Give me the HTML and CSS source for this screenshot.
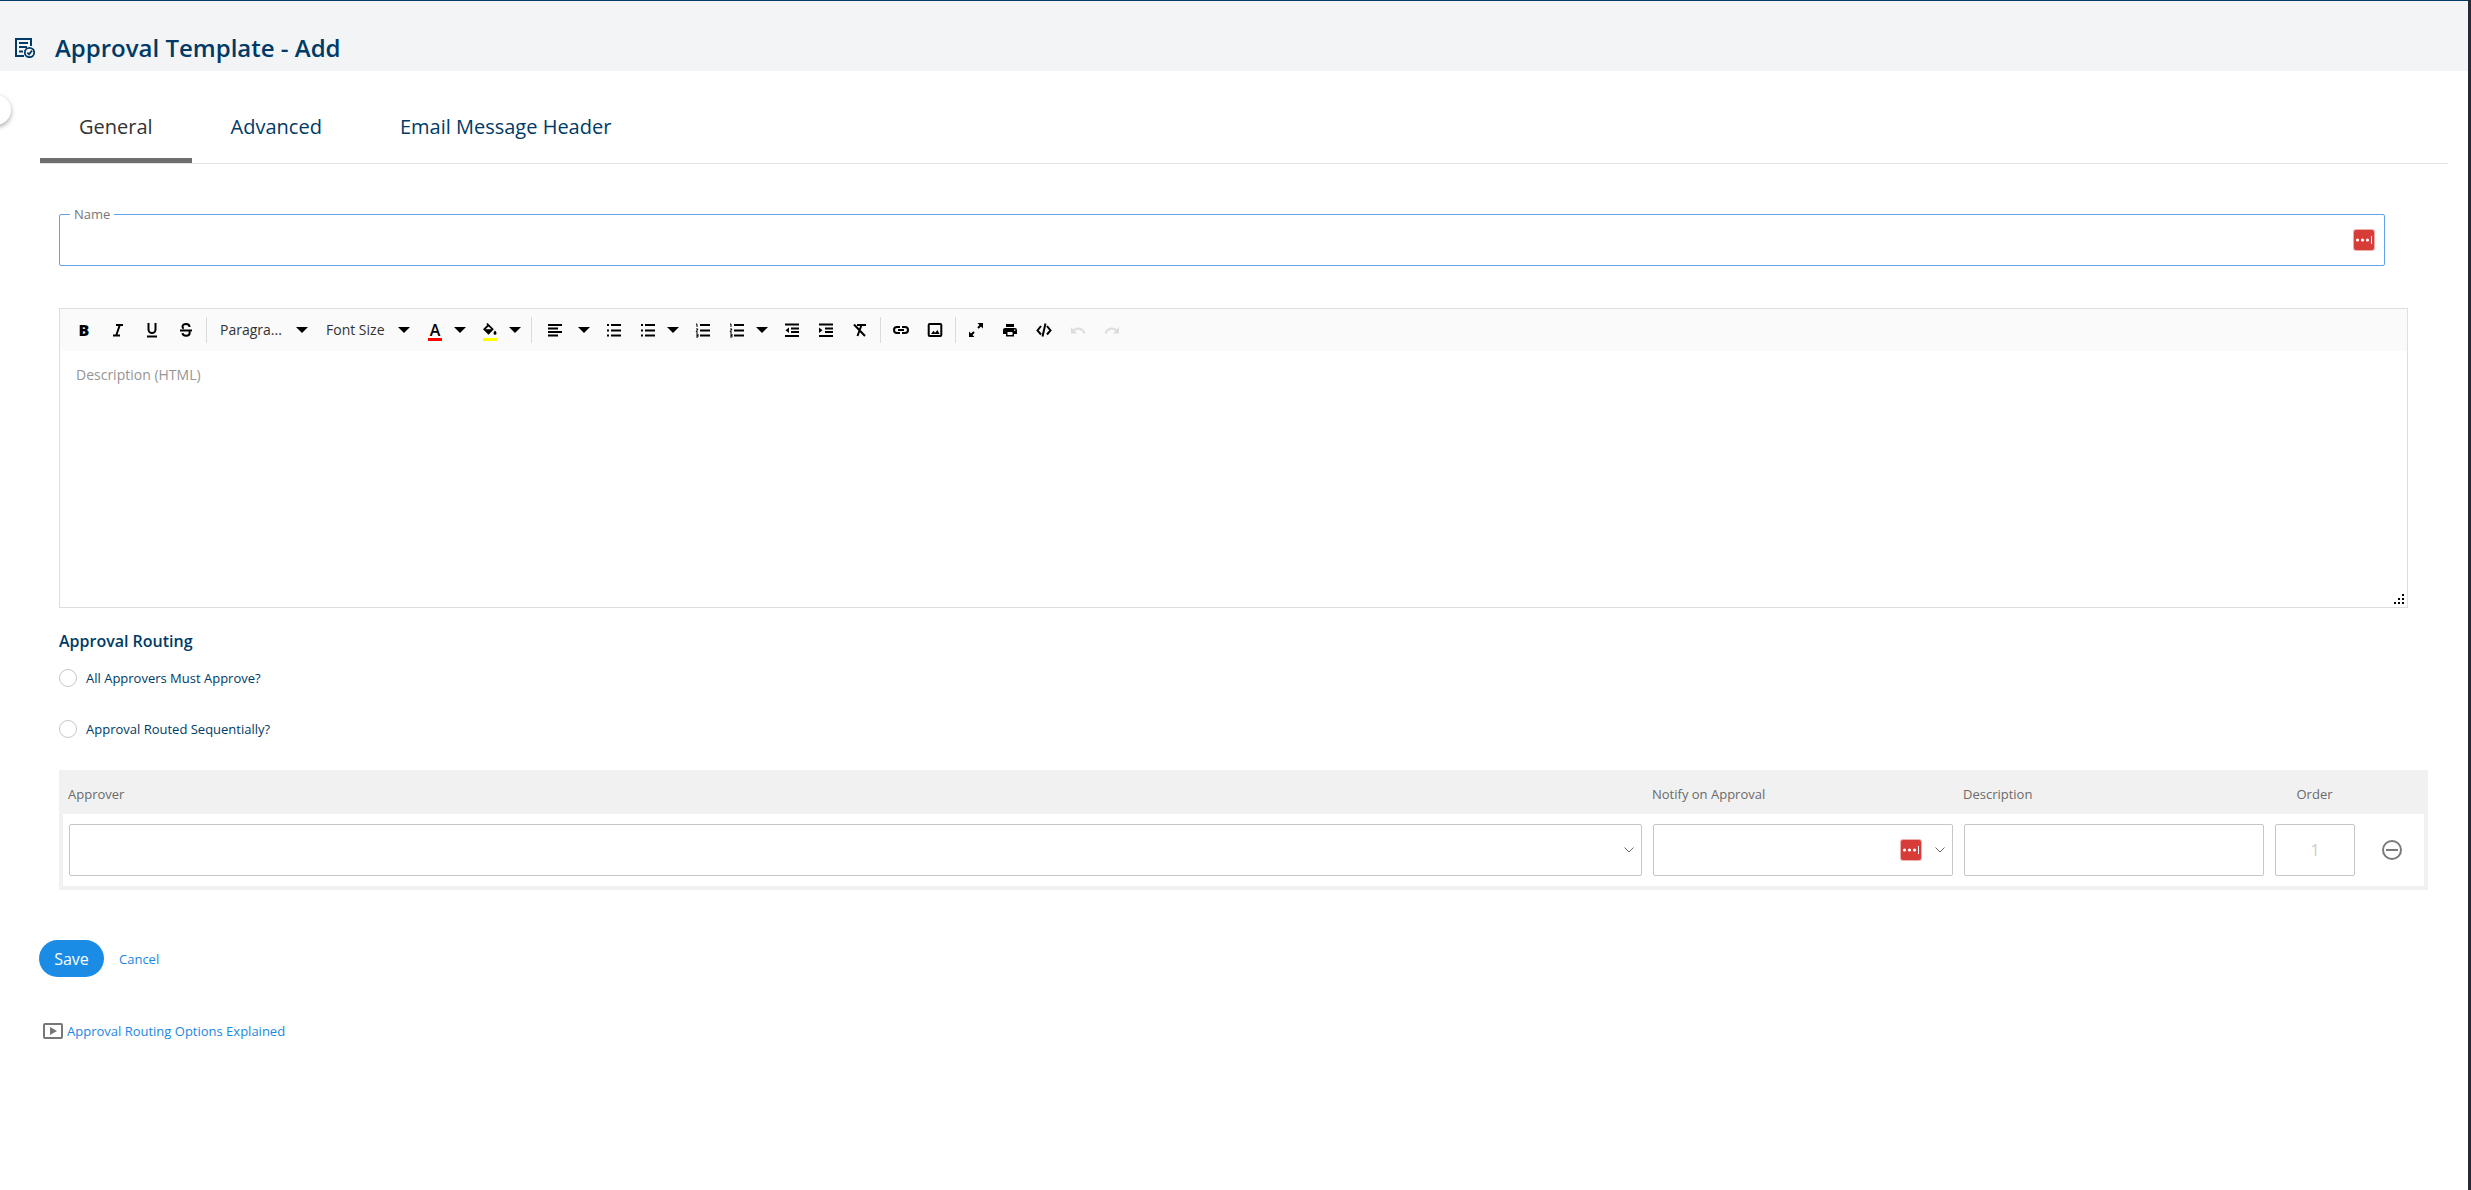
FILE: index.html
```html
<!DOCTYPE html>
<html lang="en">
<head>
<meta charset="utf-8">
<title>Approval Template - Add</title>
<link rel="stylesheet" href="styles.css">
</head>
<body>
<header class="page-header">
  <svg class="page-icon" viewBox="0 0 20 20" fill="none" stroke="currentColor" stroke-width="2" aria-hidden="true">
    <path d="M16 8V1H1v17h8"/>
    <path d="M4 5h9M4 9h8M4 13.500h4"/>
    <circle cx="14.500" cy="14.500" r="4.700" stroke-width="1.800"/>
    <path d="M12.300 14.500l1.700 1.800 3-3.600" stroke-width="1.800"/>
  </svg>
  <h1 class="page-title">Approval Template - Add</h1>
</header>
<button class="drawer-handle" type="button" aria-label="Open menu"></button>
<main class="content">
  <nav class="tabs">
    <a class="tab tab-active" href="#general">General</a>
    <a class="tab" href="#advanced">Advanced</a>
    <a class="tab" href="#header">Email Message Header</a>
  </nav>
  <form class="form">
    <fieldset class="name-field">
      <legend class="name-legend"><label for="name">Name</label></legend>
      <input class="name-input" id="name" type="text">
      <svg class="vault" viewBox="0 0 22 22" aria-hidden="true"><rect width="22" height="22" rx="3" fill="#eeb0ae"/><rect x="1" y="1" width="20" height="20" rx="2" fill="#d83c39"/><g fill="#fff"><circle cx="4.500" cy="11" r="1.600"/><circle cx="9.500" cy="11" r="1.600"/><circle cx="14.500" cy="11" r="1.600"/><rect x="18" y="7" width="1" height="8"/></g></svg>
    </fieldset>

    <section class="editor">
      <div class="toolbar" role="toolbar" aria-label="Formatting">
        <button class="tool letter bold" type="button" aria-label="Bold">B</button>
        <button class="tool" type="button" aria-label="Italic"><svg class="glyph" viewBox="0 0 16 16"><path d="M6 3h7M3 13.500h7M9.800 3L6.200 13.500"/></svg></button>
        <button class="tool" type="button" aria-label="Underline"><svg class="glyph" viewBox="0 0 16 16"><path d="M4.500 1v6.500a3.500 3.500 0 0 0 7 0V1M3 14.500h10"/></svg></button>
        <button class="tool" type="button" aria-label="Strikethrough"><svg class="glyph" viewBox="0 0 16 16"><path d="M2 8.500h12M11.500 5C11.500 1 4.500 1 4.500 4.500c0 1 .5 1.800 1.200 2.200M4.500 11.200c.3 3.400 7.200 3.400 7.200-.2 0-.6-.2-1-.5-1.500"/></svg></button>
        <span class="sep"></span>
        <span class="picker picker-format">
          <select class="picker-select" aria-label="Format"><option>Paragra...</option></select>
          <svg class="caret" viewBox="0 0 12 6"><path d="M0 0h12L6 6z"/></svg>
        </span>
        <span class="picker">
          <select class="picker-select" aria-label="Font size"><option>Font Size</option></select>
          <svg class="caret" viewBox="0 0 12 6"><path d="M0 0h12L6 6z"/></svg>
        </span>
        <span class="split">
          <button class="tool letter swatch" type="button" aria-label="Font color">A</button>
          <button class="drop" type="button" aria-label="Font color options"><svg class="caret" viewBox="0 0 12 6"><path d="M0 0h12L6 6z"/></svg></button>
        </span>
        <span class="split">
          <button class="tool swatch swatch-yellow" type="button" aria-label="Background color"><svg class="glyph solid" viewBox="0 0 16 16"><path fill-rule="evenodd" d="M5.500 1l6.300 6.300-5.300 5.500L1 7.300l4.300-4.300-1-1zM6.500 4.500L3.500 7.300h6zM13 8.500c1 1.300 1.500 2 1.500 2.700a1.500 1.500 0 0 1-3 0c0-.7.5-1.400 1.500-2.700z"/></svg></button>
          <button class="drop" type="button" aria-label="Background color options"><svg class="caret" viewBox="0 0 12 6"><path d="M0 0h12L6 6z"/></svg></button>
        </span>
        <span class="sep"></span>
        <span class="split wide">
          <button class="tool" type="button" aria-label="Align"><svg class="glyph" viewBox="0 0 16 16"><path d="M1 3h14M1 6.500h10M1 10h14M1 13.500h10"/></svg></button>
          <button class="drop" type="button" aria-label="Align options"><svg class="caret" viewBox="0 0 12 6"><path d="M0 0h12L6 6z"/></svg></button>
        </span>
        <button class="tool" type="button" aria-label="Bulleted list"><svg class="glyph" viewBox="0 0 16 16"><path d="M1 3h2M5 3h10M1 8.500h2M5 8.500h10M1 13.500h2M5 13.500h10"/></svg></button>
        <span class="split">
          <button class="tool" type="button" aria-label="Bullet format"><svg class="glyph" viewBox="0 0 16 16"><path d="M1 3h2M5 3h10M1 8.500h2M5 8.500h10M1 13.500h2M5 13.500h10"/></svg></button>
          <button class="drop" type="button" aria-label="Bullet format options"><svg class="caret" viewBox="0 0 12 6"><path d="M0 0h12L6 6z"/></svg></button>
        </span>
        <button class="tool" type="button" aria-label="Numbered list"><svg class="glyph" viewBox="0 0 16 16"><path d="M5 3h10M5 8.500h10M5 13.500h10"/><path class="thin" d="M1 2h1v3M1 7h2L1 10h2M1 12h2v3H1M1.500 13.500H3"/></svg></button>
        <span class="split">
          <button class="tool" type="button" aria-label="Number format"><svg class="glyph" viewBox="0 0 16 16"><path d="M5 3h10M5 8.500h10M5 13.500h10"/><path class="thin" d="M1 2h1v3M1 7h2L1 10h2M1 12h2v3H1M1.500 13.500H3"/></svg></button>
          <button class="drop" type="button" aria-label="Number format options"><svg class="caret" viewBox="0 0 12 6"><path d="M0 0h12L6 6z"/></svg></button>
        </span>
        <button class="tool" type="button" aria-label="Outdent"><svg class="glyph" viewBox="0 0 16 16"><path d="M1 2.500h14M7 6.500h8M7 10h8M1 14h14"/><path class="solid" d="M5 5.500v5.500L1.500 8.200z"/></svg></button>
        <button class="tool" type="button" aria-label="Indent"><svg class="glyph" viewBox="0 0 16 16"><path d="M1 2.500h14M7 6.500h8M7 10h8M1 14h14"/><path class="solid" d="M1 5.500v5.500l3.500-2.800z"/></svg></button>
        <button class="tool" type="button" aria-label="Clear format"><svg class="glyph" viewBox="0 0 16 16"><path d="M2 2.500l11 11.500M5 3h9M9.500 3L5.500 14"/></svg></button>
        <span class="sep"></span>
        <button class="tool" type="button" aria-label="Insert link"><svg class="glyph" viewBox="0 0 16 16"><path d="M7 5H4a3 3 0 0 0 0 6h3M9 5h3a3 3 0 0 1 0 6H9M5 8h6"/></svg></button>
        <button class="tool" type="button" aria-label="Insert image"><svg class="glyph" viewBox="0 0 16 16"><rect x="1.700" y="2" width="12.600" height="12" rx="1"/><path class="solid" d="M4 12l2.500-3.300 1.500 2L10.500 8l2 4z"/></svg></button>
        <span class="sep"></span>
        <button class="tool" type="button" aria-label="Full screen"><svg class="glyph" viewBox="0 0 16 16"><path d="M10 6l3.500-3.500M6 10l-3.500 3.500"/><path class="solid" d="M9.500 1H15v5.500zM1 9.500V15h5.500z"/></svg></button>
        <button class="tool" type="button" aria-label="Print"><svg class="glyph solid" viewBox="0 0 16 16"><path fill-rule="evenodd" d="M4 2h8v3H4zM3 6h10a2 2 0 0 1 2 2v4h-3v2.500H4V12H1V8a2 2 0 0 1 2-2zM5.500 10v3h5v-3zM12 7.500v1.300h1.300V7.500z"/></svg></button>
        <button class="tool" type="button" aria-label="Source code"><svg class="glyph" viewBox="0 0 16 16"><path d="M5 4L1.500 8.500 5 12.500M11 4l3.500 4.500L11 12.500M9.500 1.500l-3 13"/></svg></button>
        <button class="tool" type="button" aria-label="Undo" disabled><svg class="glyph" viewBox="0 0 16 16"><path d="M3.500 8.500c4-3.500 9-2 11 2.800"/><path class="solid" d="M1 5v6.500h6z"/></svg></button>
        <button class="tool" type="button" aria-label="Redo" disabled><svg class="glyph" viewBox="0 0 16 16"><path d="M12.500 8.500c-4-3.500-9-2-11 2.800"/><path class="solid" d="M15 5v6.500H9z"/></svg></button>
      </div>
      <textarea class="editor-text" aria-label="Description" placeholder="Description (HTML)"></textarea>
      <svg class="grip" viewBox="0 0 10 10" aria-hidden="true"><path d="M0 8h2v2H0zM4 8h2v2H4zM8 8h2v2H8zM4 4h2v2H4zM8 4h2v2H8zM8 0h2v2H8z"/></svg>
    </section>

    <h2 class="section-title">Approval Routing</h2>
    <div class="choices">
      <label class="choice"><input class="radio" type="radio" name="routing">All Approvers Must Approve?</label>
      <label class="choice"><input class="radio" type="radio" name="routing">Approval Routed Sequentially?</label>
    </div>

    <table class="approvers">
      <thead>
        <tr><th>Approver</th><th class="col-mid">Notify on Approval</th><th class="col-mid">Description</th><th class="col-order">Order</th><th class="col-remove"></th></tr>
      </thead>
      <tbody>
        <tr>
          <td><span class="combo"><select class="box" aria-label="Approver"><option></option></select><svg class="chevron" viewBox="0 0 10 6"><path d="M.5.5L5 5 9.500.5"/></svg></span></td>
          <td><span class="combo"><select class="box" aria-label="Notify on Approval"><option></option></select><svg class="vault" viewBox="0 0 22 22" aria-hidden="true"><rect width="22" height="22" rx="3" fill="#eeb0ae"/><rect x="1" y="1" width="20" height="20" rx="2" fill="#d83c39"/><g fill="#fff"><circle cx="4.500" cy="11" r="1.600"/><circle cx="9.500" cy="11" r="1.600"/><circle cx="14.500" cy="11" r="1.600"/><rect x="18" y="7" width="1" height="8"/></g></svg><svg class="chevron" viewBox="0 0 10 6"><path d="M.5.5L5 5 9.500.5"/></svg></span></td>
          <td><input class="box" type="text" aria-label="Description"></td>
          <td><input class="box order" type="text" value="1" aria-label="Order" disabled></td>
          <td class="remove-cell"><button class="remove" type="button" aria-label="Remove approver"><svg class="remove-icon" viewBox="0 0 20 20"><circle cx="10" cy="10" r="9"/><path d="M4 10h12"/></svg></button></td>
        </tr>
      </tbody>
    </table>
  </form>

  <div class="actions">
    <button class="save" type="button">Save</button>
    <a class="link" href="#cancel">Cancel</a>
  </div>
  <a class="link help" href="#help"><svg class="play" viewBox="0 0 20 16"><rect x="1" y="1" width="18" height="14" rx="1"/><path d="M7 4l7 4-7 4z"/></svg>Approval Routing Options Explained</a>
</main>
</body>
</html>
```

FILE: styles.css
```css
* { box-sizing: border-box; }

body {
  margin: 0;
  min-height: 100vh;
  border-right: 3px solid #262a38;
  background: #fff;
  color: #003a66;
  font: 13px/18px "Open Sans", sans-serif;
}

button, input, select, textarea { font: inherit; color: inherit; }
button { padding: 0; border: 0; background: none; }

.page-header {
  display: flex;
  align-items: center;
  gap: 20px;
  height: 71px;
  padding: 24px 15px 0;
  border-top: 1px solid #003a66;
  background: #f3f4f6;
}
.page-icon { width: 20px; height: 20px; }
.page-title { margin: 0; font-size: 24px; line-height: 32px; font-weight: 600; }

.drawer-handle {
  position: absolute;
  left: -19px;
  top: 95px;
  width: 30px;
  height: 30px;
  border-radius: 50%;
  background: #fff;
  box-shadow: 0 2px 5px rgba(0, 0, 0, .35);
}

.content { padding: 0 20px 40px 39px; }

.tabs { display: flex; height: 93px; margin-left: 1px; padding-top: 24px; border-bottom: 1px solid #e4e4e4; }
.tab {
  padding: 16px 39px 0;
  border-bottom: 5px solid transparent;
  color: #003a66;
  font-size: 20px;
  line-height: 32px;
  font-weight: 500;
  text-decoration: none;
}
.tab-active { border-color: #6e6e6e; color: #333; }

.form { padding: 41px 20px 0; }

.name-field {
  display: flex;
  align-items: center;
  height: 61px;
  margin: 0 43px 0 0;
  padding: 0 9px 9px 10px;
  border: 1px solid #65a2ee;
  border-radius: 2px;
}
.name-legend { padding: 0 4px; color: #777; line-height: 19px; }
.name-input { flex: 1; height: 32px; border: 0; outline: 0; background: none; }
.vault { width: 22px; height: 22px; }

.editor {
  position: relative;
  margin: 42px 20px 0 0;
  border: 1px solid #dedede;
}
.toolbar {
  display: flex;
  align-items: center;
  height: 42px;
  padding: 0 7px;
  background: #fafafa;
  color: #000;
}
.tool { display: flex; justify-content: center; align-items: center; width: 34px; height: 32px; }
.tool:disabled { color: #dcdcdc; }
.glyph { flex: none; width: 16px; height: 16px; fill: none; stroke: currentColor; stroke-width: 2; }
.glyph .thin { stroke-width: 1; }
.solid, .glyph .solid { fill: currentColor; stroke: none; }
.letter { font-size: 16px; line-height: 16px; font-weight: 600; }
.bold { font-weight: 800; }
.sep { width: 1px; height: 26px; margin: 0 3px; background: #dadada; }
.split { display: flex; align-items: center; padding: 0 3px; }
.split .tool { width: 28px; }
.split .swatch { width: 14px; height: 20px; margin: 2px 7px 0; border-bottom: 3px solid #f00; }
.split .swatch-yellow { border-color: #ff0; }
.drop { display: flex; justify-content: center; align-items: center; width: 21px; height: 32px; }
.wide { padding: 0 2px; }
.wide .tool { width: 36px; }
.wide .drop { width: 22px; }
.caret { width: 12px; height: 6px; fill: #000; }
.picker { display: flex; align-items: center; width: 102px; padding: 0 8px 0 10px; }
.picker-format { width: 106px; }
.picker-select { flex: 1; min-width: 0; padding: 0; border: 0; background: none; appearance: none; color: #333; font-size: 14px; line-height: 20px; }

.editor-text {
  display: block;
  width: 100%;
  height: 256px;
  padding: 14px 16px;
  border: 0;
  outline: 0;
  resize: none;
  font-size: 14px;
  line-height: 20px;
}
.editor-text::placeholder { color: #959595; }
.grip { position: absolute; right: 3px; bottom: 3px; width: 10px; height: 10px; }

.section-title { margin: 21px 0 16px; font-size: 16px; line-height: 24px; font-weight: 600; }

.choices { display: grid; gap: 33px; justify-content: start; margin-bottom: 32px; }
.choice { display: flex; align-items: center; gap: 9px; }
.radio { appearance: none; width: 18px; height: 18px; margin: 0; border: 1px solid #c3c8cd; border-radius: 50%; background: #fff; }

.approvers {
  width: 100%;
  table-layout: fixed;
  border: 4px solid #f1f1f1;
  border-spacing: 0;
}
.approvers th { height: 40px; padding: 0 5px; background: #f1f1f1; color: #6a6a6a; font-weight: 400; text-align: left; }
.approvers td { height: 72px; padding: 0 5px 0 6px; }
.approvers .remove-cell { padding: 0; }
.col-mid { width: 311px; }
.approvers .col-order { width: 91px; text-align: center; }
.col-remove { width: 64px; }
.combo { position: relative; display: block; }
.box {
  display: block;
  width: 100%;
  height: 52px;
  border: 1px solid #c6c6c6;
  border-radius: 2px;
  background: #fff;
  appearance: none;
}
.order { color: #ccc; font-size: 16px; text-align: center; }
.chevron { position: absolute; right: 8px; top: 23px; width: 10px; height: 6px; fill: none; stroke: #666; stroke-width: 1; }
.combo .vault { position: absolute; right: 31px; top: 15px; pointer-events: none; }
.remove { display: block; margin: 0 auto; height: 20px; }
.remove-icon { display: block; width: 20px; height: 20px; fill: none; stroke: #7a7a7a; stroke-width: 2; }

.actions { display: flex; align-items: center; gap: 15px; margin-top: 50px; }
.save { width: 65px; height: 37px; border-radius: 19px; background: #1b8ce6; color: #fff; font-size: 16px; font-weight: 500; }
.link { color: #1b86e3; text-decoration: none; }
.help { display: flex; align-items: center; gap: 4px; width: max-content; margin: 45px 0 0 4px; }
.play { width: 20px; height: 16px; fill: #777; stroke: none; }
.play rect { fill: none; stroke: #777; stroke-width: 2; }
```
